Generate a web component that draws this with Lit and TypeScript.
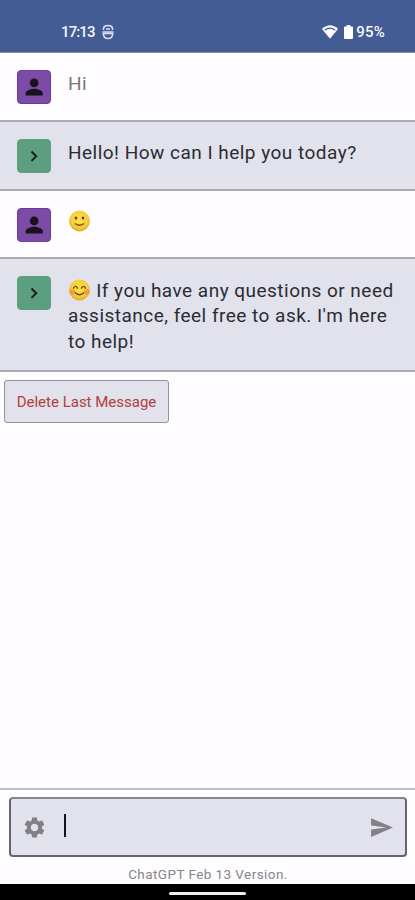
import { LitElement, html, css, svg } from "lit";
import { customElement, property } from "lit/decorators.js";

@customElement("face-emoji")
class FaceEmoji extends LitElement {
  @property({ type: Boolean }) blush = false;
  static styles = css`
    :host { display: inline-block; width: 22px; height: 22px; margin-right: 1px; vertical-align: -4px; }
    svg { display: block; }
    .line { fill: none; stroke: #70501b; stroke-width: 1.4; stroke-linecap: round; }
  `;
  render() {
    return html`<svg width="22" height="22" viewBox="0 0 22 22">
      <defs><radialGradient id="g" cx=".5" cy=".42" r=".58">
        <stop offset="0" stop-color="#fbdf4c"/><stop offset=".65" stop-color="#f8d03a"/><stop offset="1" stop-color="#e3a62f"/>
      </radialGradient></defs>
      <circle cx="11.5" cy="11" r="10.4" fill="url(#g)"/>
      ${this.blush
        ? svg`<circle cx="4.3" cy="13" r="2.8" fill="#f0803a" opacity=".6"/><circle cx="18.7" cy="13" r="2.8" fill="#f0803a" opacity=".6"/>
            <path class="line" d="M5.5 9.2Q7.5 5.6 9.5 9.2M13.5 9.2Q15.5 5.6 17.5 9.2M7.3 13.7Q11.5 17.6 15.7 13.7"/>`
        : svg`<ellipse cx="8" cy="8" rx="1.3" ry="1.6" fill="#5c421b"/><ellipse cx="15" cy="8" rx="1.3" ry="1.6" fill="#5c421b"/>
            <path class="line" d="M7.3 13.8Q11.5 16.8 15.7 13.8"/>`}
    </svg>`;
  }
}

@customElement("chat-message")
class ChatMessage extends LitElement {
  @property({ type: Boolean, reflect: true }) bot = false;
  @property({ type: Boolean, reflect: true }) muted = false;
  static styles = css`
    :host { display: flex; box-sizing: border-box; padding: 17px 0 15.8px 17px; gap: 17px; border-bottom: 2px solid #abacb3; background: #fefcff; color: #2b2c32; }
    :host([bot]) { background: #e1e2ec; }
    :host([muted]) { color: #77777a; }
    .avatar { flex: none; box-sizing: border-box; width: 34px; height: 34px; border-radius: 4px; background: #7b4ba5; border: 1px solid #693c98; }
    .avatar.bot { background: #5c9f80; border-color: #5c9f80; }
    svg { display: block; margin: -1px; }
    .text { flex: 1; margin-top: 1.3px; font-size: 19px; line-height: 25.4px; letter-spacing: .48px; white-space: nowrap; }
  `;
  render() {
    return html`
      <div class="avatar ${this.bot ? "bot" : ""}">
        ${this.bot
          ? html`<svg width="34" height="34" viewBox="0 0 34 34"><path d="M14.5 12.5l4.7 4.7-4.7 4.7" fill="none" stroke="#151e1a" stroke-width="2"/></svg>`
          : html`<svg width="34" height="34" viewBox="0 0 34 34"><circle cx="17.2" cy="12.9" r="4.3" fill="#17121d"/><path d="M8.7 25.6v-2.3c0-3 5.5-4.5 8.5-4.5s8.5 1.5 8.5 4.5v2.3z" fill="#17121d"/></svg>`}
      </div>
      <div class="text"><slot></slot></div>`;
  }
}

@customElement("app-root")
class AppRoot extends LitElement {
  static styles = css`
    :host { display: flex; flex-direction: column; width: 415px; height: 900px; overflow: hidden; background: #fefcff; font-family: Roboto, sans-serif; }
    .status { box-sizing: border-box; height: 53px; flex: none; display: flex; align-items: center; padding: 12px 30px 0 61px; background: #435c94; border-bottom: 1px solid #7c8db4; color: #f4f6fc; font-size: 15px; font-weight: 500; }
    .status svg { display: block; flex: none; }
    .debug { margin-left: 5px; }
    .wifi { margin-left: auto; }
    .battery { margin: 0 3px 0 6px; }
    .time { letter-spacing: -.9px; width: 35px; white-space: nowrap; }
    .pct { letter-spacing: .2px; }
    .delete { align-self: flex-start; box-sizing: border-box; width: 165px; height: 43px; margin: 8px 0 0 4px; padding: 0; border: 1px solid #92939c; border-radius: 3px; background: #e1e2ec; color: #b3403c; font: 400 15px/42px Roboto, sans-serif; letter-spacing: 0; text-align: center; }
    .composer { margin-top: auto; border-top: 2px solid #bdbdc2; padding: 7px 8px 0 9px; height: 96px; box-sizing: border-box; flex: none; }
    .field { box-sizing: border-box; height: 60px; border: 2px solid #656571; border-top-color: #85858f; border-radius: 4px; background: #e1e2ec; display: flex; align-items: center; padding: 0 11px; }
    .caret { width: 2px; height: 23px; margin: -3px auto 0 17px; background: #15151c; }
    .version { margin-top: 9px; text-align: center; font-size: 13.5px; line-height: 17px; letter-spacing: .43px; color: #858589; }
    .nav { height: 16px; flex: none; display: flex; align-items: center; justify-content: center; background: #000; }
    .handle { width: 77px; height: 3px; border-radius: 2px; background: #f0f0f0; margin-top: 2px; }
  `;
  render() {
    return html`
      <div class="status">
        <span class="time">17:13</span>
        <svg class="debug" width="14" height="16" viewBox="0 0 14 16"><path d="M2.5 6V4.8Q2.5 1.5 7 1.5t4.5 3.3V6" fill="none" stroke="#d9e1f4" stroke-width="1.6"/><path d="M1.5 8h11M5 5h4M3 12.5h1" stroke="#d9e1f4" stroke-width="1.5"/><path d="M2.3 9.5q0 5 4.7 5t4.7-5z" fill="none" stroke="#d9e1f4" stroke-width="1.5"/></svg>
        <svg class="wifi" width="16" height="14" viewBox="0 0 16 14"><path d="M0 4Q8-3.5 16 4L8 13.7z" fill="#fff"/><path d="M2.7 5.2Q8 1.2 13.3 5.2" fill="none" stroke="#435c94" stroke-width="1.2"/></svg>
        <svg class="battery" width="9" height="14" viewBox="0 0 9 14"><path d="M2.7 0h3.6v1.5H8q1 0 1 1V13q0 1-1 1H1q-1 0-1-1V2.5q0-1 1-1h1.7z" fill="#fff"/></svg>
        <span class="pct">95%</span>
      </div>
      <chat-message muted>Hi</chat-message>
      <chat-message bot>Hello! How can I help you today?</chat-message>
      <chat-message><face-emoji></face-emoji></chat-message>
      <chat-message bot><face-emoji blush></face-emoji> If you have any questions or need<br>assistance, feel free to ask. I'm here<br>to help!</chat-message>
      <button class="delete">Delete Last Message</button>
      <div class="composer">
        <div class="field">
          <svg width="25" height="25" viewBox="0 0 24 24"><path fill="#808086" d="M19.14 12.94c.04-.3.06-.61.06-.94 0-.32-.02-.64-.07-.94l2.03-1.58c.18-.14.23-.41.12-.61l-1.92-3.32c-.12-.22-.37-.29-.59-.22l-2.39.96c-.5-.38-1.03-.7-1.62-.94l-.36-2.54c-.04-.24-.24-.41-.48-.41h-3.84c-.24 0-.43.17-.47.41l-.36 2.54c-.59.24-1.13.57-1.62.94l-2.39-.96c-.22-.08-.47 0-.59.22L2.74 8.87c-.12.21-.08.47.12.61l2.03 1.58c-.05.3-.09.63-.09.94s.02.64.07.94l-2.03 1.58c-.18.14-.23.41-.12.61l1.92 3.32c.12.22.37.29.59.22l2.39-.96c.5.38 1.03.7 1.62.94l.36 2.54c.05.24.24.41.48.41h3.84c.24 0 .44-.17.47-.41l.36-2.54c.59-.24 1.13-.56 1.62-.94l2.39.96c.22.08.47 0 .59-.22l1.92-3.32c.12-.22.07-.47-.12-.61l-2.01-1.58zM12 15.6c-1.98 0-3.6-1.62-3.6-3.6s1.62-3.6 3.6-3.6 3.6 1.62 3.6 3.6-1.62 3.6-3.6 3.6z"/></svg>
          <span class="caret"></span>
          <svg width="25" height="25" viewBox="0 0 24 24"><path fill="#808086" d="M2.01 21L23 12 2.01 3 2 10l15 2-15 2z"/></svg>
        </div>
        <div class="version">ChatGPT Feb 13 Version.</div>
      </div>
      <div class="nav"><div class="handle"></div></div>`;
  }
}
